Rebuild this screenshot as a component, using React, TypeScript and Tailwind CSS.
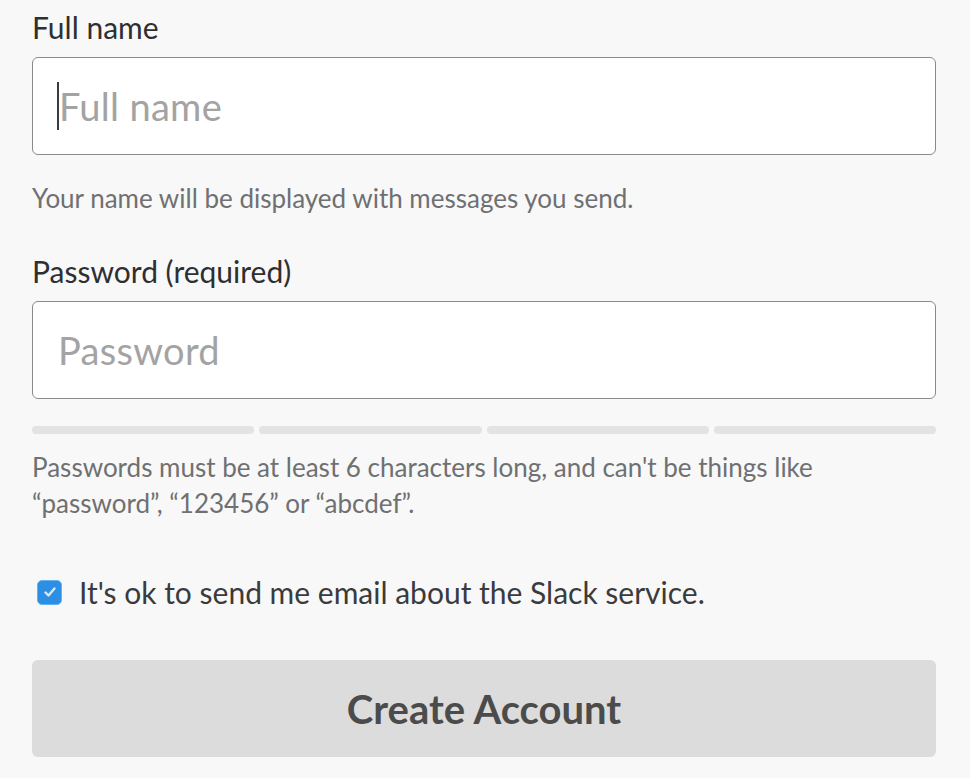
import React from 'react';

const App: React.FC = () => {
  return (
    <div className="min-h-[778px] w-full bg-[#f8f8f8] font-['Lato','Liberation_Sans',sans-serif]">
      <form className="flex flex-col px-[32px] pt-[9px] w-[968px]" onSubmit={(e) => e.preventDefault()}>
        {/* Full name */}
        <label className="text-[30px] leading-[36px] text-[#2e2f31]">Full name</label>
        <div className="relative mt-[12px]">
          <input
            type="text"
            placeholder="Full name"
            className="w-full h-[98px] rounded-[6px] border-[1.5px] border-[#8a8a8a] bg-white pl-[26px] text-[38px] tracking-[0.3px] text-[#2c2d30] outline-none placeholder:text-[#a3a3a3]"
          />
          <span className="absolute left-[25px] top-[25px] h-[48px] w-[2px] bg-[#3a3b3d]" />
        </div>
        <p className="mt-[27px] text-[26px] leading-[32px] text-[#6f7072]">
          Your name will be displayed with messages you send.
        </p>

        {/* Password */}
        <label className="mt-[39px] text-[30px] leading-[36px] text-[#2e2f31]">Password (required)</label>
        <input
          type="password"
          placeholder="Password"
          className="mt-[12px] w-full h-[98px] rounded-[6px] border-[1.5px] border-[#8a8a8a] bg-white pl-[25px] text-[38px] tracking-[0.3px] text-[#2c2d30] outline-none placeholder:text-[#a3a3a3]"
        />
        <div className="mt-[27px] flex gap-[5px]">
          <div className="h-[8px] flex-1 rounded-full bg-[#e3e3e3]" />
          <div className="h-[8px] flex-1 rounded-full bg-[#e3e3e3]" />
          <div className="h-[8px] flex-1 rounded-full bg-[#e3e3e3]" />
          <div className="h-[8px] flex-1 rounded-full bg-[#e3e3e3]" />
        </div>
        <p className="mt-[15px] text-[26px] leading-[36px] text-[#6f7072]">
          Passwords must be at least 6 characters long, and can't be things like
          <br />
          “password”, “123456” or “abcdef”.
        </p>

        {/* Opt-in */}
        <label className="mt-[53px] flex items-center h-[36px] pl-[5px]">
          <span className="flex items-center justify-center w-[25px] h-[25px] rounded-[5px] bg-[#2d8fe3] border border-[#66b1f0]">
            <svg viewBox="0 0 16 16" className="w-[16px] h-[16px]" fill="none" stroke="#d6eafb" strokeWidth="2.4" strokeLinecap="round" strokeLinejoin="round">
              <path d="M3.5 8.5 L6.5 11.5 L12.5 4.5" />
            </svg>
          </span>
          <span className="ml-[17px] text-[30px] leading-[36px] text-[#3a3b3d]">
            It's ok to send me email about the Slack service.
          </span>
        </label>

        {/* Submit */}
        <button
          type="submit"
          className="mt-[50px] h-[97px] w-full rounded-[6px] bg-[#dcdcdc] text-[40px] font-bold text-[#4b4b4b]"
        >
          Create Account
        </button>
      </form>
    </div>
  );
};

export default App;
